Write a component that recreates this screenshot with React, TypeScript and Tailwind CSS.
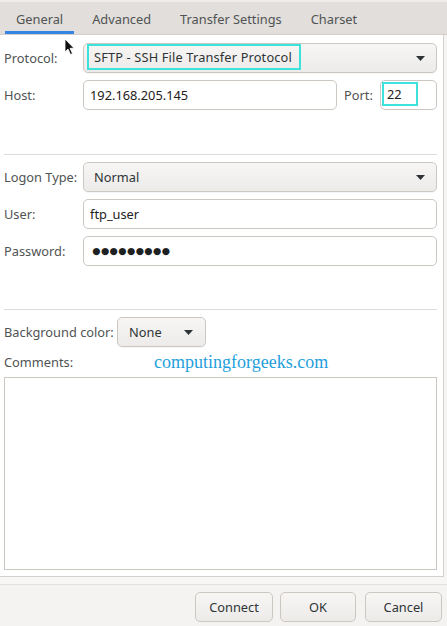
import React from "react";

const Arrow = () => (
  <svg width="9" height="5" viewBox="0 0 9 5" className="shrink-0">
    <path d="M0 0 L9 0 L4.5 5 Z" fill="#2e3436" />
  </svg>
);

const Label = ({ children, w }: { children: React.ReactNode; w: string }) => (
  <div className={`${w} shrink-0 text-[#505353]`}>{children}</div>
);

const comboCls =
  "flex items-center h-[30px] rounded-[5px] border border-[#cdc7c2] bg-gradient-to-b from-[#f7f6f5] to-[#edebe9] shadow-[0_1px_0_rgba(0,0,0,0.04)]";
const inputCls =
  "flex items-center h-[30px] rounded-[5px] border border-[#cdc7c2] bg-white text-[#1e2122]";
const btnCls =
  "flex items-center justify-center h-[30px] rounded-[5px] border border-[#cdc7c2] bg-gradient-to-b from-[#f7f6f5] to-[#edebe9] text-[#2e3436]";

export default function App() {
  return (
    <div
      className="relative w-[447px] h-[626px] flex flex-col bg-[#f6f5f4] text-[12.8px] leading-[18px] overflow-hidden"
      style={{ fontFamily: '"Noto Sans", "Open Sans", sans-serif' }}
    >
      {/* Tab bar */}
      <div className="h-[35px] shrink-0 flex items-stretch pl-[5px] gap-[7px] bg-[#e1dedb] border-t-2 border-t-[#efedeb] border-b border-b-[#d3cec9] text-[#505353]">
        <div className="px-[11px] pt-[4px] flex items-center border-b-[3px] border-[#3584e4]">General</div>
        <div className="px-[11px] pt-[4px] flex items-center border-b-[3px] border-transparent">Advanced</div>
        <div className="px-[11px] pt-[4px] flex items-center border-b-[3px] border-transparent">Transfer Settings</div>
        <div className="px-[11px] pt-[4px] flex items-center border-b-[3px] border-transparent">Charset</div>
      </div>

      {/* Page */}
      <div className="w-[444px] h-[542px] shrink-0 flex flex-col bg-white border-r border-b border-[#d5d0cc] pl-[4px] pr-[6px] pt-[8px] pb-[6px]">
        {/* Protocol */}
        <div className="flex items-center h-[30px]">
          <Label w="w-[79px]">Protocol:</Label>
          <div className={`${comboCls} flex-1 items-start pr-[11px]`}>
            <div className="ml-[3px] w-[214px] h-[26px] flex items-center border-2 border-[#3ee2dc] pl-[5px] tracking-[0.15px] text-[#2e3436]">
              SFTP - SSH File Transfer Protocol
            </div>
            <div className="flex-1" />
            <div className="self-center">
              <Arrow />
            </div>
          </div>
        </div>

        {/* Host */}
        <div className="flex items-center h-[30px] mt-[7px]">
          <Label w="w-[79px]">Host:</Label>
          <div className={`${inputCls} flex-1 pl-[6px]`}>192.168.205.145</div>
          <div className="ml-[7px] w-[36px] shrink-0 text-[#505353]">Port:</div>
          <div className={`${inputCls} w-[57px] shrink-0 items-start`}>
            <div className="ml-[1px] mt-[1px] w-[36px] h-[24px] flex items-center border-2 border-[#3ee2dc] pl-[3px]">
              22
            </div>
          </div>
        </div>

        <div className="mt-[44px] h-px bg-[#dedad6]" />

        {/* Logon Type */}
        <div className="flex items-center h-[30px] mt-[7px]">
          <Label w="w-[79px]">Logon Type:</Label>
          <div className={`${comboCls} flex-1 pl-[10px] pr-[11px] text-[#2e3436]`}>
            <span className="flex-1">Normal</span>
            <Arrow />
          </div>
        </div>

        {/* User */}
        <div className="flex items-center h-[30px] mt-[7px]">
          <Label w="w-[79px]">User:</Label>
          <div className={`${inputCls} flex-1 pl-[6px]`}>ftp_user</div>
        </div>

        {/* Password */}
        <div className="flex items-center h-[30px] mt-[7px]">
          <Label w="w-[79px]">Password:</Label>
          <div className={`${inputCls} flex-1 pl-[8px]`}>
            {Array.from({ length: 9 }).map((_, i) => (
              <span
                key={i}
                className="inline-flex w-[8.7px] justify-center overflow-hidden text-[9.5px] leading-[10px] text-[#1e2122]"
                style={{ fontFamily: '"DejaVu Sans", sans-serif' }}
              >
                ●
              </span>
            ))}
          </div>
        </div>

        <div className="mt-[43px] h-px bg-[#dedad6]" />

        {/* Background color */}
        <div className="flex items-center h-[30px] mt-[7px]">
          <Label w="w-[113px]">Background color:</Label>
          <div className={`${comboCls} w-[89px] pl-[11px] pr-[12px] text-[#2e3436]`}>
            <span className="flex-1">None</span>
            <Arrow />
          </div>
        </div>

        {/* Comments */}
        <div className="flex items-center h-[18px] mt-[6px]">
          <Label w="w-[150px]">Comments:</Label>
          <span
            className="text-[18px] leading-[18px] text-[#1f9fdc]"
            style={{ fontFamily: '"Liberation Serif", serif' }}
          >
            computingforgeeks.com
          </span>
        </div>

        <div className="mt-[6px] flex-1 border border-[#cdc7c2] bg-white" />
      </div>

      {/* Separator area */}
      <div className="h-[7px] shrink-0 bg-[#f7f6f5]" />
      <div className="h-px shrink-0 bg-[#e2dfdc]" />

      {/* Buttons */}
      <div className="flex-1 flex justify-end items-start pt-[7px] pr-[5px] bg-[#f4f3f2]">
        <div className={`${btnCls} w-[78px]`}>Connect</div>
        <div className={`${btnCls} w-[76px] ml-[7px]`}>OK</div>
        <div className={`${btnCls} w-[77px] ml-[9px]`}>Cancel</div>
      </div>

      {/* Mouse cursor */}
      <svg
        className="absolute left-[64px] top-[38px]"
        width="12"
        height="18"
        viewBox="0 0 12 18"
      >
        <path
          d="M1 1 L1 14 L4 11 L6.5 16.5 L8.5 15.6 L6 10.3 L10 10.3 Z"
          fill="#111"
          stroke="#fff"
          strokeWidth="0.8"
          strokeLinejoin="round"
        />
      </svg>
    </div>
  );
}
